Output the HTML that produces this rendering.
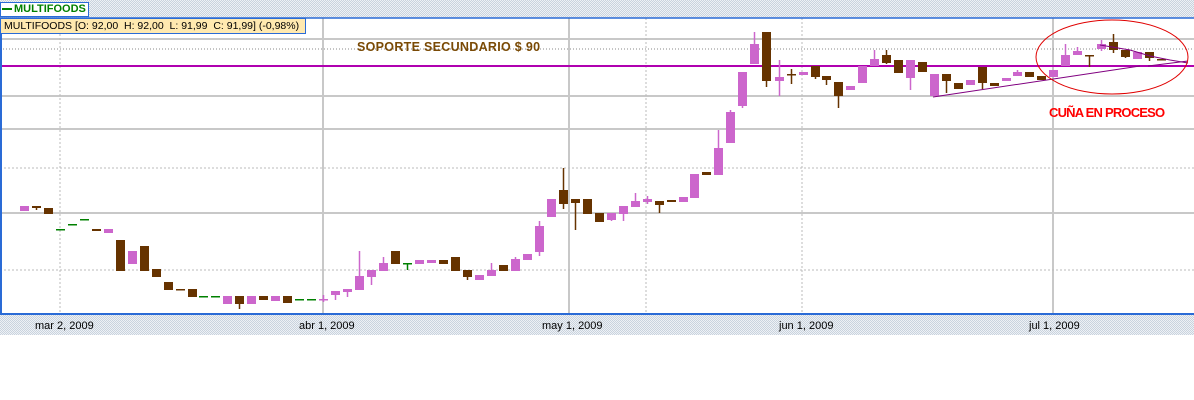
<!DOCTYPE html>
<html><head><meta charset="utf-8"><style>
html,body{margin:0;padding:0;background:#fff;}
body{width:1194px;height:400px;position:relative;overflow:hidden;font-family:"Liberation Sans",sans-serif;}
.pat{position:absolute;left:0;width:1194px;background-color:#dfe5ec;background-image:repeating-conic-gradient(#c9d3de 0 25%,#eef1f5 0 50%);background-size:2px 2px;}
</style></head><body>
<div class="pat" style="top:0;height:18px"></div>
<div class="pat" style="top:315px;height:20px"></div>
<svg width="1194" height="400" style="position:absolute;left:0;top:0" xmlns="http://www.w3.org/2000/svg">
<rect x="0" y="18" width="1194" height="297" fill="#fff"/>
<g stroke="#c8c8c8" stroke-width="2">
<line x1="0" y1="39" x2="1194" y2="39"/>
<line x1="0" y1="96" x2="1194" y2="96"/>
<line x1="0" y1="129" x2="1194" y2="129"/>
<line x1="0" y1="213" x2="1194" y2="213"/>
<line x1="323" y1="18" x2="323" y2="314"/>
<line x1="569" y1="18" x2="569" y2="314"/>
<line x1="1053" y1="18" x2="1053" y2="314"/>
</g>
<g stroke="#bbb" stroke-width="1" stroke-dasharray="2,2">
<line x1="0" y1="168" x2="1194" y2="168"/>
<line x1="0" y1="270" x2="1194" y2="270"/>
<line x1="60" y1="18" x2="60" y2="314"/>
<line x1="646" y1="18" x2="646" y2="314"/>
<line x1="802" y1="18" x2="802" y2="314"/>
</g>
<line x1="0" y1="49" x2="1194" y2="49" stroke="#888" stroke-width="1" stroke-dasharray="1,2"/>
<line x1="0" y1="66" x2="1194" y2="66" stroke="#b000b0" stroke-width="2"/>
<g id="c"></g>
<line x1="933" y1="97" x2="1140" y2="66" stroke="#800080" stroke-width="1"/>
<polyline points="1100,45 1130,50 1150,56 1170,60 1188,63" fill="none" stroke="#800080" stroke-width="1"/>
<line x1="1148" y1="66" x2="1188" y2="61" stroke="#800080" stroke-width="1"/>
<ellipse cx="1112" cy="57" rx="76" ry="37" fill="none" stroke="#e00000" stroke-width="1"/>
<text x="357" y="51" font-family="Liberation Sans" font-weight="bold" font-size="12.5" fill="#7a4a05" letter-spacing="0.3">SOPORTE SECUNDARIO $ 90</text>
<text x="1049" y="117" font-family="Liberation Sans" font-size="13" font-weight="bold" fill="#ff0000" letter-spacing="-0.8">CUÑA EN PROCESO</text>
<line x1="0" y1="314" x2="1194" y2="314" stroke="#2a6bd6" stroke-width="2"/>
<line x1="1" y1="18" x2="1" y2="314" stroke="#2a6bd6" stroke-width="2"/>
<line x1="0" y1="18" x2="1194" y2="18" stroke="#2a6bd6" stroke-width="1.5"/>
<g font-family="Liberation Sans" font-size="11" fill="#000">
<text x="35" y="329">mar 2, 2009</text>
<text x="299" y="329">abr 1, 2009</text>
<text x="542" y="329">may 1, 2009</text>
<text x="779" y="329">jun 1, 2009</text>
<text x="1029" y="329">jul 1, 2009</text>
</g>
</svg>
<div style="position:absolute;left:0;top:2px;width:86px;height:13px;background:#fff;border:1px solid #2a6bd6;font-size:11px;font-weight:bold;color:#008000;line-height:13px;padding-left:1px"><span style="display:inline-block;width:10px;height:2px;background:#008000;vertical-align:middle;margin-right:2px"></span>MULTIFOODS</div>
<div style="position:absolute;left:0;top:18px;width:301px;height:14px;background:#ffe9b0;border:1px solid #2a6bd6;font-size:10.5px;color:#000;line-height:14px;padding-left:3px;white-space:nowrap">MULTIFOODS [O: 92,00&nbsp; H: 92,00&nbsp; L: 91,99&nbsp; C: 91,99] (-0,98%)</div>
<script>
var P="#cc66cc",B="#663300",G="#008000";
var d=[
[20,206,211,P],[32,206,208,B,206,210],[44,208,214,B],[56,229,229,G],[68,224,224,G],[80,219,219,G],[92,229,231,B],[104,229,233,P],
[116,240,271,B],[128,251,264,P],[140,246,271,B],[152,269,277,B],[164,282,290,B],[176,289,290,B],[188,289,297,B],[199,296,296,G],
[211,296,296,G],[223,296,304,P],[235,296,304,B,296,309],[247,296,304,P],[259,296,300,B],[271,296,301,P],[283,296,303,B],[295,299,299,G],
[307,299,299,G],[319,299,299,P,295,302],[331,291,295,P,291,300],[343,289,292,P,289,297],[355,276,290,P,251,290],[367,270,277,P,270,285],
[379,263,271,P,257,271],[391,251,264,B],[403,263,263,G,263,270],[415,260,264,P],[427,260,263,P],[439,260,264,B],[451,257,271,B],
[463,270,277,B,270,280],[475,275,280,P],[487,270,276,P,263,276],[499,265,271,B],[511,259,271,P,257,271],[523,254,260,P],
[535,226,252,P,221,256],[547,199,217,P],[559,190,204,B,168,209],[571,199,203,B,199,230],[583,199,214,B],[595,213,222,B],
[607,213,220,P,213,221],[619,206,214,P,206,221],[631,201,207,P,193,207],[643,199,202,P,196,204],[655,201,205,B,201,213],
[667,200,202,B],[679,197,202,P],[690,174,198,P],[702,172,175,B],[714,148,175,P,130,175],[726,112,143,P,110,143],
[738,72,106,P,72,108],[750,44,64,P,32,64],[762,32,81,B,32,87],[775,77,81,P,60,96],[787,74,75,B,69,84],[799,72,75,P],
[811,66,77,B,66,79],[822,76,80,B,76,85],[834,82,96,B,82,108],[846,86,90,P],[858,66,83,P],[870,59,66,P,50,66],[882,55,63,B,50,64],
[894,60,73,B],[906,60,78,P,60,90],[918,62,72,B],[930,74,96,P],[942,74,81,B,74,93],[954,83,89,B],[966,80,85,P],[978,67,83,B,67,89],
[990,83,86,B],[1002,78,81,P],[1013,72,76,P,70,76],[1025,72,77,B],[1037,76,80,B],[1049,70,77,P],[1061,55,66,P,44,66],[1073,51,55,P,47,55],
[1085,55,56,B,55,67],[1097,44,49,P,40,51],[1109,42,50,B,34,53],[1121,50,57,B,50,58],[1133,52,59,P],[1145,52,58,B,52,61],[1157,59,60,B]];
var s="";
d.forEach(function(c){var x=c[0],w=9,cx=x+4.5;
if(c[4]!==undefined)s+='<line x1="'+cx+'" y1="'+c[4]+'" x2="'+cx+'" y2="'+c[5]+'" stroke="'+c[3]+'" stroke-width="1.5"/>';
var h=Math.max(c[2]-c[1],1.5);s+='<rect x="'+x+'" y="'+c[1]+'" width="'+w+'" height="'+h+'" fill="'+c[3]+'"/>';});
document.getElementById("c").innerHTML=s;
</script>
</body></html>
